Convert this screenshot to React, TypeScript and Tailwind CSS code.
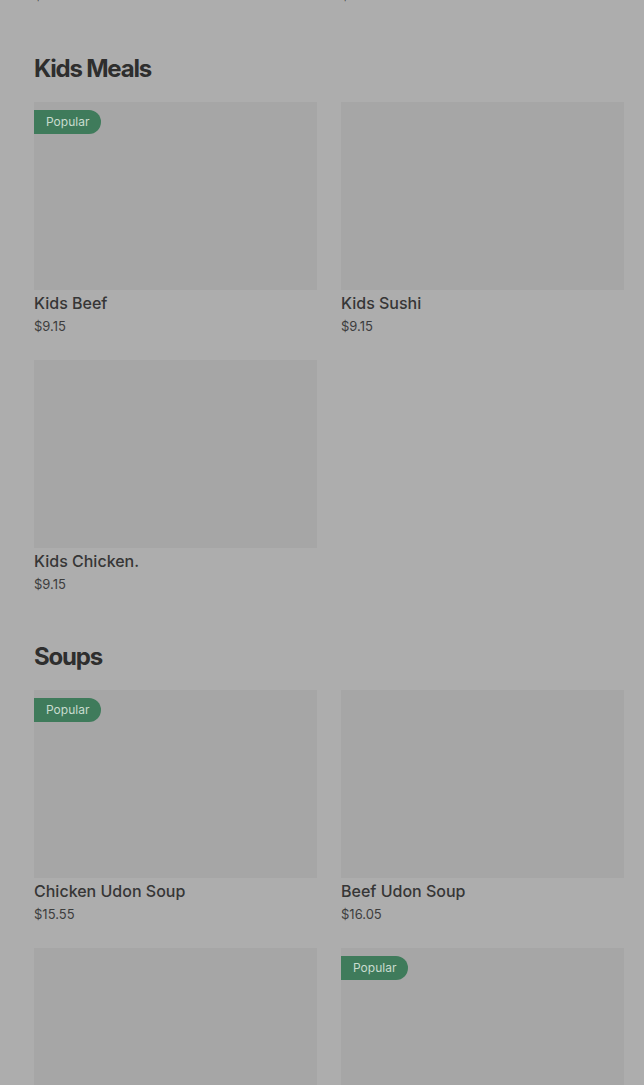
const font = { fontFamily: "Inter, 'Liberation Sans', sans-serif" };

type Item = { name: string; price: string; popular?: boolean };

const sections: { title: string; items: Item[] }[] = [
  {
    title: "Kids Meals",
    items: [
      { name: "Kids Beef", price: "$9.15", popular: true },
      { name: "Kids Sushi", price: "$9.15" },
      { name: "Kids Chicken.", price: "$9.15" },
    ],
  },
  {
    title: "Soups",
    items: [
      { name: "Chicken Udon Soup", price: "$15.55", popular: true },
      { name: "Beef Udon Soup", price: "$16.05" },
      { name: "Miso Soup", price: "$4.95" },
      { name: "Seafood Udon Soup", price: "$17.25", popular: true },
    ],
  },
];

function ItemCard({ item }: { item: Item }) {
  return (
    <div className="flex flex-col">
      <div className="relative h-[188px] bg-[#a6a6a6]">
        {item.popular && (
          <span className="absolute left-0 top-2 flex h-6 items-center rounded-r-full bg-[#3f7b5b] pl-3 pr-3 text-[12px] text-[#c9dccf]">
            Popular
          </span>
        )}
      </div>
      <div className="h-6 pt-px text-[16px] leading-6 font-medium text-[#363636]">{item.name}</div>
      <div className="h-[22px] pt-px text-[13px] leading-[22px] text-[#3d3d3d]">{item.price}</div>
    </div>
  );
}

export default function App() {
  return (
    <div className="min-h-[1085px] overflow-hidden bg-[#adadad] pl-[34px] pr-[20px]" style={font}>
      <div className="-mt-[16px] grid grid-cols-2 gap-x-6">
        <div className="h-[22px] text-[13px] leading-[22px] text-[#3d3d3d]">$26.75</div>
        <div className="h-[22px] text-[13px] leading-[22px] text-[#3d3d3d]">$24.15</div>
      </div>
      {sections.map((s) => (
        <section key={s.title} className="pt-[47px]">
          <h2 className="mb-[17px] h-8 text-[24px] leading-8 font-bold tracking-[-0.05em] text-[#2e2e2e]">
            {s.title}
          </h2>
          <div className="grid grid-cols-2 gap-x-6 gap-y-6">
            {s.items.map((it) => (
              <ItemCard key={it.name} item={it} />
            ))}
          </div>
        </section>
      ))}
    </div>
  );
}
